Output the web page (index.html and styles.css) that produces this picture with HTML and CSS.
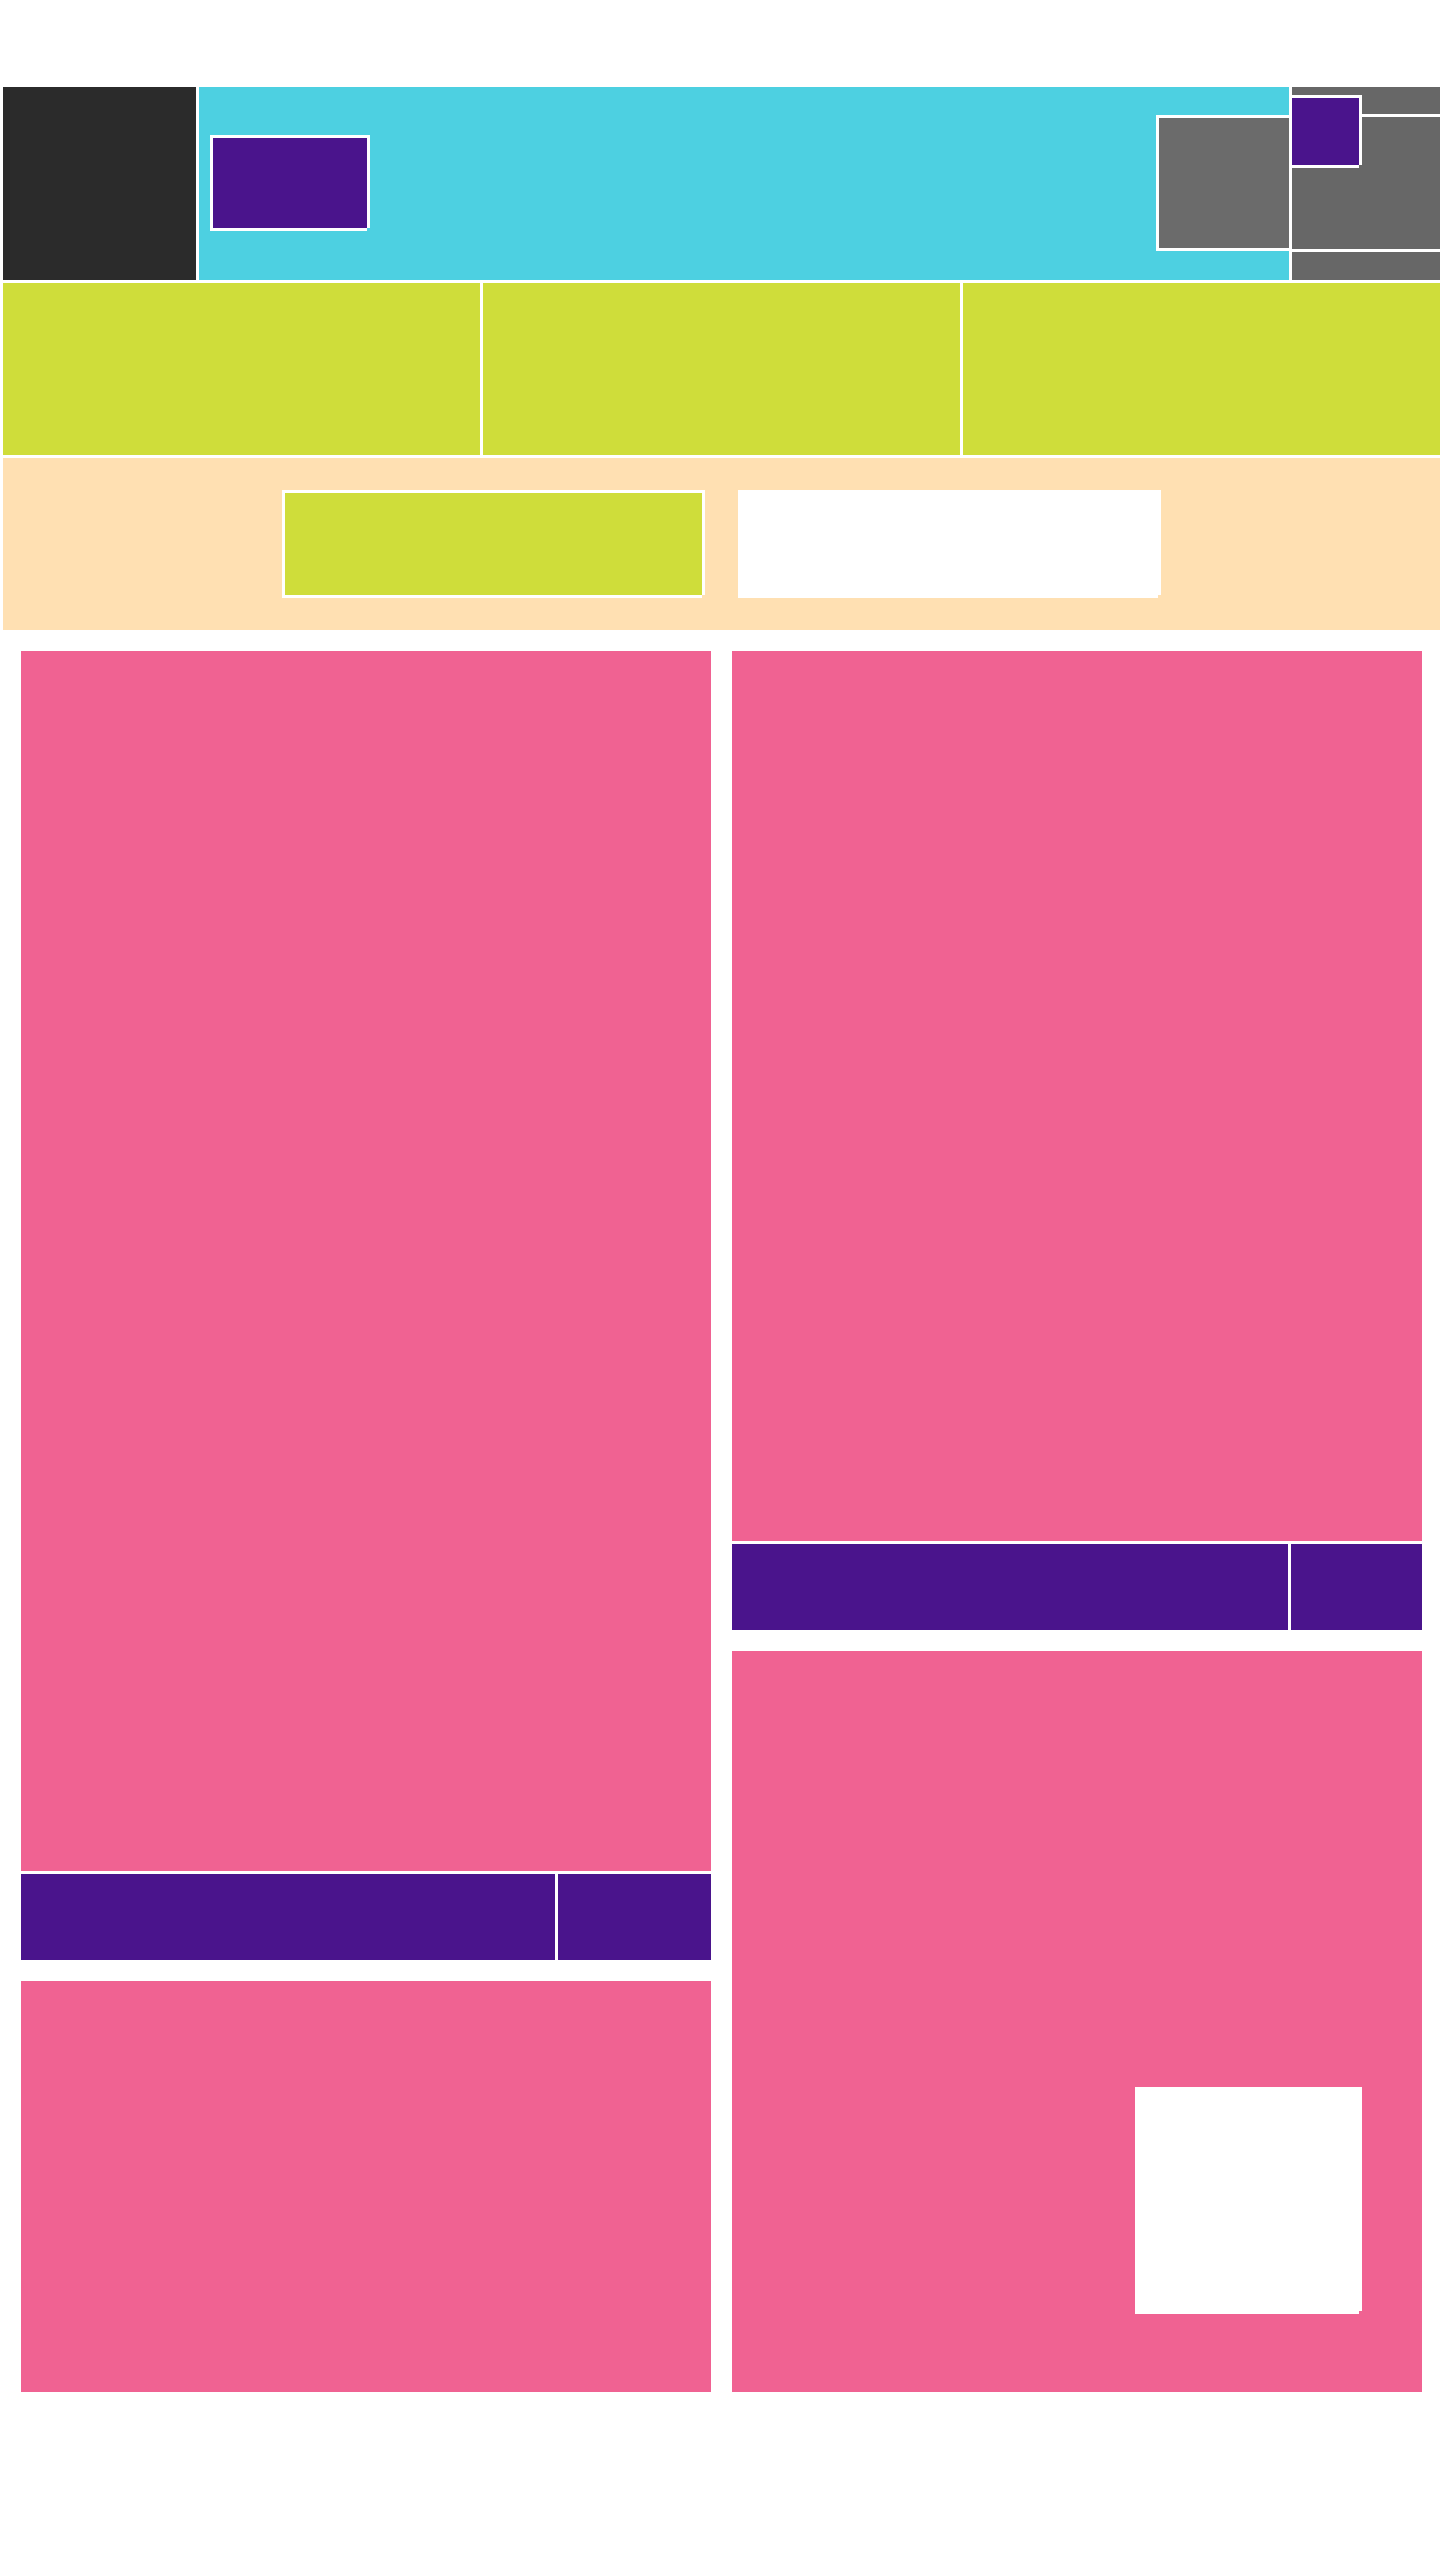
FILE: index.html
```html
<!DOCTYPE html>
<html lang="en">
<head>
<meta charset="utf-8">
<title>Layout</title>
<link rel="stylesheet" href="styles.css">
</head>
<body>
<div class="page">
  <header class="top">
    <div class="logo"></div>
    <div class="banner">
      <div class="chip notched"></div>
      <div class="thumb notched"></div>
    </div>
    <div class="side">
      <div class="side-a"></div>
      <div class="side-b"></div>
      <div class="side-c"></div>
      <div class="badge notched"></div>
    </div>
  </header>
  <nav class="tiles">
    <div class="tile"></div>
    <div class="tile"></div>
    <div class="tile"></div>
  </nav>
  <section class="promo">
    <div class="promo-btn notched"></div>
    <div class="promo-field notched"></div>
  </section>
  <main class="grid">
    <div class="col">
      <article class="card">
        <div class="card-body card-body-tall"></div>
        <div class="card-bar">
          <div class="bar-main"></div>
          <div class="bar-aside bar-aside-wide"></div>
        </div>
      </article>
      <div class="panel panel-short"></div>
    </div>
    <div class="col">
      <article class="card">
        <div class="card-body card-body-mid"></div>
        <div class="card-bar">
          <div class="bar-main"></div>
          <div class="bar-aside bar-aside-narrow"></div>
        </div>
      </article>
      <div class="panel panel-tall">
        <div class="panel-box notched"></div>
      </div>
    </div>
  </main>
</div>
</body>
</html>
```
FILE: styles.css
```css
html, body {
  margin: 0;
  padding: 0;
  background: #ffffff;
  font-family: "Liberation Sans", Arial, sans-serif;
}

.page {
  padding: 87px 0 0 3px;
  display: flex;
  flex-direction: column;
  gap: 3px;
  min-height: 2560px;
  box-sizing: border-box;
}

.notched {
  box-sizing: border-box;
  border-top: 3px solid #ffffff;
  border-left: 3px solid #ffffff;
  box-shadow: 3px 0 0 #ffffff, 0 3px 0 #ffffff;
}

/* header */
.top {
  display: flex;
  gap: 3px;
  height: 193px;
}

.logo {
  width: 193px;
  flex: none;
  background: #2b2b2b;
}

.banner {
  flex: 1;
  background: #4dd0e1;
  display: flex;
  align-items: flex-start;
}

.chip {
  width: 157px;
  height: 93px;
  margin: 48px 0 0 11px;
  background: #4a148c;
}

.thumb {
  width: 133px;
  height: 133px;
  margin: 28px 0 0 auto;
  background: #6b6b6b;
}

.side {
  width: 148px;
  flex: none;
  position: relative;
  display: flex;
  flex-direction: column;
  gap: 3px;
}

.side-a { height: 27px; background: #676767; }
.side-b { height: 132px; background: #676767; }
.side-c { flex: 1; background: #676767; }

.badge {
  position: absolute;
  left: -3px;
  top: 8px;
  width: 70px;
  height: 70px;
  background: #4a148c;
}

/* tiles */
.tiles {
  display: grid;
  grid-template-columns: repeat(3, 1fr);
  gap: 3px;
  height: 172px;
}

.tile {
  background: #cfdd3a;
}

/* promo */
.promo {
  height: 172px;
  background: #ffe0b2;
  display: flex;
  justify-content: center;
  align-items: center;
  gap: 33px;
}

.promo-btn,
.promo-field {
  width: 420px;
  height: 105px;
  margin: 0 3px 3px 0;
}

.promo-btn { background: #cfdd3a; }
.promo-field { background: #ffffff; }

/* main grid */
.grid {
  padding: 18px 18px 0 18px;
  display: grid;
  grid-template-columns: 1fr 1fr;
  gap: 21px;
  align-items: start;
}

.col {
  display: flex;
  flex-direction: column;
  gap: 21px;
}

.card {
  display: flex;
  flex-direction: column;
  gap: 3px;
}

.card-body { background: #f06292; }
.card-body-tall { height: 1220px; }
.card-body-mid { height: 890px; }

.card-bar {
  height: 86px;
  display: flex;
  gap: 3px;
}

.bar-main {
  flex: 1;
  background: #4a148c;
}

.bar-aside {
  flex: none;
  background: #4a148c;
}

.bar-aside-wide { width: 153px; }
.bar-aside-narrow { width: 131px; }

.panel {
  background: #f06292;
  box-sizing: border-box;
}

.panel-short { height: 411px; }

.panel-tall {
  height: 741px;
  display: flex;
  justify-content: flex-end;
  align-items: flex-end;
  padding: 0 63px 81px 0;
}

.panel-box {
  width: 224px;
  height: 224px;
  background: #ffffff;
}
```
